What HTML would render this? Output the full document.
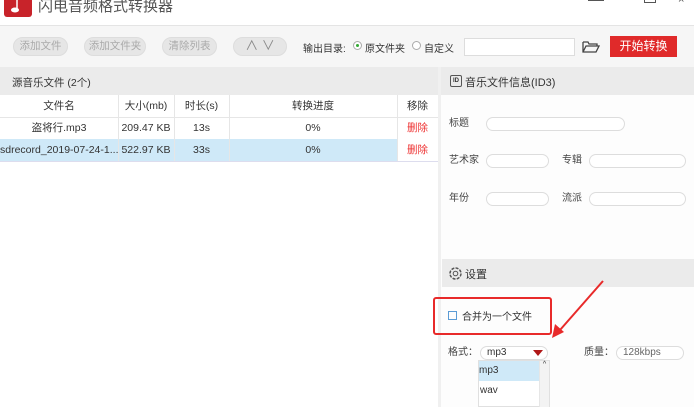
<!DOCTYPE html>
<html><head><meta charset="utf-8"><style>
*{margin:0;padding:0;box-sizing:border-box}
body{width:694px;height:407px;overflow:hidden;background:#fff;font-family:"Liberation Sans","Noto Sans CJK SC",sans-serif;font-size:11px;color:#333;position:relative}
.a{position:absolute}
.btn{position:absolute;top:37px;height:19px;border-radius:10px;background:#e6e6e6;border:1px solid #ddd;color:#aaa;font-size:10.5px;text-align:center;line-height:17px}
.inp{position:absolute;height:14px;border:1px solid #ddd;border-radius:8px;background:#fff}
.lbl{position:absolute;font-size:10px;color:#444;line-height:14px}
.cell{position:absolute;text-align:center;font-size:10.5px;line-height:22px}
.vl{position:absolute;width:1px;background:#e6e6e6}
</style></head><body>
<div class="a" style="left:4px;top:-4px;width:28px;height:21px;background:#c8232a;border-radius:3px"></div>
<svg class="a" style="left:8px;top:0" width="20" height="16"><path d="M9 0v9" stroke="#fff" stroke-width="1.5"/><ellipse cx="7" cy="10" rx="4" ry="2.5" fill="#fff"/></svg>
<div class="a" style="left:38px;top:-5px;font-size:15px;color:#555">闪电音频格式转换器</div>
<div class="a" style="left:588px;top:0;width:16px;height:1px;background:#555"></div>
<div class="a" style="left:644px;top:-6px;width:12px;height:9px;border:1px solid #555"></div>
<div class="a" style="left:678px;top:-6px;font-size:11px;color:#555">×</div>
<div class="a" style="left:0;top:25px;width:694px;height:42px;background:#f6f6f6;border-top:1px solid #e4e4e4"></div>
<div class="btn" style="left:13px;width:55px">添加文件</div>
<div class="btn" style="left:84px;width:62px">添加文件夹</div>
<div class="btn" style="left:162px;width:55px">清除列表</div>
<div class="btn" style="left:233px;width:54px;color:#888;font-size:13px;line-height:16px">∧ ∨</div>
<div class="a" style="left:303px;top:40px;font-size:10px">输出目录:</div>
<div class="a" style="left:353px;top:41px;width:9px;height:9px;border:1px solid #aaa;border-radius:50%;background:#fff"></div>
<div class="a" style="left:356px;top:44px;width:3px;height:3px;border-radius:50%;background:#3a3"></div>
<div class="a" style="left:365px;top:40px;font-size:10px">原文件夹</div>
<div class="a" style="left:412px;top:41px;width:9px;height:9px;border:1px solid #aaa;border-radius:50%;background:#fff"></div>
<div class="a" style="left:424px;top:40px;font-size:10px">自定义</div>
<div class="a" style="left:464px;top:38px;width:111px;height:18px;background:#fff;border:1px solid #ddd"></div>
<svg class="a" style="left:582px;top:40px" width="18" height="14"><path d="M1 2h5l1 2h8v2M1 2v10h13l3-6H4L1 12" fill="none" stroke="#444" stroke-width="1.3"/></svg>
<div class="a" style="left:610px;top:36px;width:67px;height:21px;background:#e02a2a;color:#fff;font-size:12px;text-align:center;line-height:21px">开始转换</div>
<div class="a" style="left:0;top:67px;width:438px;height:28px;background:#ebebeb"></div>
<div class="a" style="left:12px;top:75px;font-size:10.5px">源音乐文件 (2个)</div>
<div class="a" style="left:0;top:117px;width:438px;height:1px;background:#e6e6e6"></div>
<div class="a" style="left:0;top:139px;width:398px;height:22px;background:#cfe9f8"></div>
<div class="a" style="left:0;top:161px;width:438px;height:1px;background:#dde"></div>
<div class="vl" style="left:118px;top:95px;height:66px"></div>
<div class="vl" style="left:174px;top:95px;height:66px"></div>
<div class="vl" style="left:229px;top:95px;height:66px"></div>
<div class="vl" style="left:397px;top:95px;height:66px"></div>
<div class="cell" style="left:0;top:95px;width:118px">文件名</div>
<div class="cell" style="left:118px;top:95px;width:56px">大小(mb)</div>
<div class="cell" style="left:174px;top:95px;width:55px">时长(s)</div>
<div class="cell" style="left:229px;top:95px;width:168px">转换进度</div>
<div class="cell" style="left:397px;top:95px;width:41px">移除</div>
<div class="cell" style="left:0;top:117px;width:118px">盗将行.mp3</div>
<div class="cell" style="left:118px;top:117px;width:56px">209.47 KB</div>
<div class="cell" style="left:174px;top:117px;width:55px">13s</div>
<div class="cell" style="left:229px;top:117px;width:168px">0%</div>
<div class="cell" style="left:397px;top:117px;width:41px;color:#e33">删除</div>
<div class="cell" style="left:0;top:139px;width:118px;text-align:left;white-space:nowrap">sdrecord_2019-07-24-1...</div>
<div class="cell" style="left:118px;top:139px;width:56px">522.97 KB</div>
<div class="cell" style="left:174px;top:139px;width:55px">33s</div>
<div class="cell" style="left:229px;top:139px;width:168px">0%</div>
<div class="cell" style="left:397px;top:139px;width:41px;color:#e33">删除</div>
<div class="a" style="left:438px;top:67px;width:3px;height:340px;background:#f0f0f0"></div>
<div class="a" style="left:441px;top:67px;width:253px;height:340px;background:#fdfdfd"></div>
<div class="a" style="left:441px;top:67px;width:253px;height:28px;background:#ebebeb"></div>
<div class="a" style="left:450px;top:75px;width:12px;height:12px;border:1px solid #555;border-radius:2px;font-size:6px;line-height:10px;text-align:center;font-weight:bold">ID</div>
<div class="a" style="left:465px;top:74px;font-size:11px">音乐文件信息(ID3)</div>
<div class="lbl" style="left:449px;top:117px">标题</div><div class="inp" style="left:486px;top:117px;width:139px"></div>
<div class="lbl" style="left:449px;top:154px">艺术家</div><div class="inp" style="left:486px;top:154px;width:63px"></div>
<div class="lbl" style="left:562px;top:154px">专辑</div><div class="inp" style="left:589px;top:154px;width:97px"></div>
<div class="lbl" style="left:449px;top:192px">年份</div><div class="inp" style="left:486px;top:192px;width:63px"></div>
<div class="lbl" style="left:562px;top:192px">流派</div><div class="inp" style="left:589px;top:192px;width:97px"></div>
<div class="a" style="left:442px;top:259px;width:252px;height:28px;background:#ebebeb"></div>
<svg class="a" style="left:448px;top:266px" width="15" height="15"><circle cx="7.5" cy="7.5" r="5.5" fill="none" stroke="#555" stroke-width="1.5" stroke-dasharray="3 1.3"/><circle cx="7.5" cy="7.5" r="2.3" fill="none" stroke="#555"/></svg>
<div class="a" style="left:465px;top:266px;font-size:11px">设置</div>
<div class="a" style="left:433px;top:297px;width:119px;height:38px;border:2px solid #e82a2a;border-radius:3px"></div>
<div class="a" style="left:448px;top:311px;width:9px;height:9px;border:1px solid #5b9bd5"></div>
<div class="a" style="left:462px;top:308px;font-size:10px">合并为一个文件</div>
<svg class="a" style="left:0;top:0" width="694" height="407"><line x1="603" y1="281" x2="560" y2="330" stroke="#e82a2a" stroke-width="2"/><path d="M552 338l3-14 9 8z" fill="#e82a2a"/></svg>
<div class="lbl" style="left:448px;top:346px">格式：</div>
<div class="inp" style="left:480px;top:346px;width:68px;font-size:10px;line-height:12px;padding-left:6px">mp3</div>
<div class="a" style="left:533px;top:350px;width:0;height:0;border-left:5px solid transparent;border-right:5px solid transparent;border-top:6px solid #b01818"></div>
<div class="lbl" style="left:584px;top:346px">质量：</div>
<div class="inp" style="left:616px;top:346px;width:68px;font-size:10px;line-height:12px;padding-left:6px;color:#666">128kbps</div>
<div class="a" style="left:478px;top:360px;width:72px;height:47px;background:#fff;border:1px solid #e0e0e0"></div>
<div class="a" style="left:479px;top:361px;width:60px;height:20px;background:#cfe9f8;font-size:10px;line-height:20px">mp3</div>
<div class="a" style="left:480px;top:385px;font-size:10px">wav</div>
<div class="a" style="left:539px;top:361px;width:10px;height:46px;background:#f3f3f3;border-left:1px solid #e6e6e6;font-size:7px;text-align:center">^</div>
</body></html>
